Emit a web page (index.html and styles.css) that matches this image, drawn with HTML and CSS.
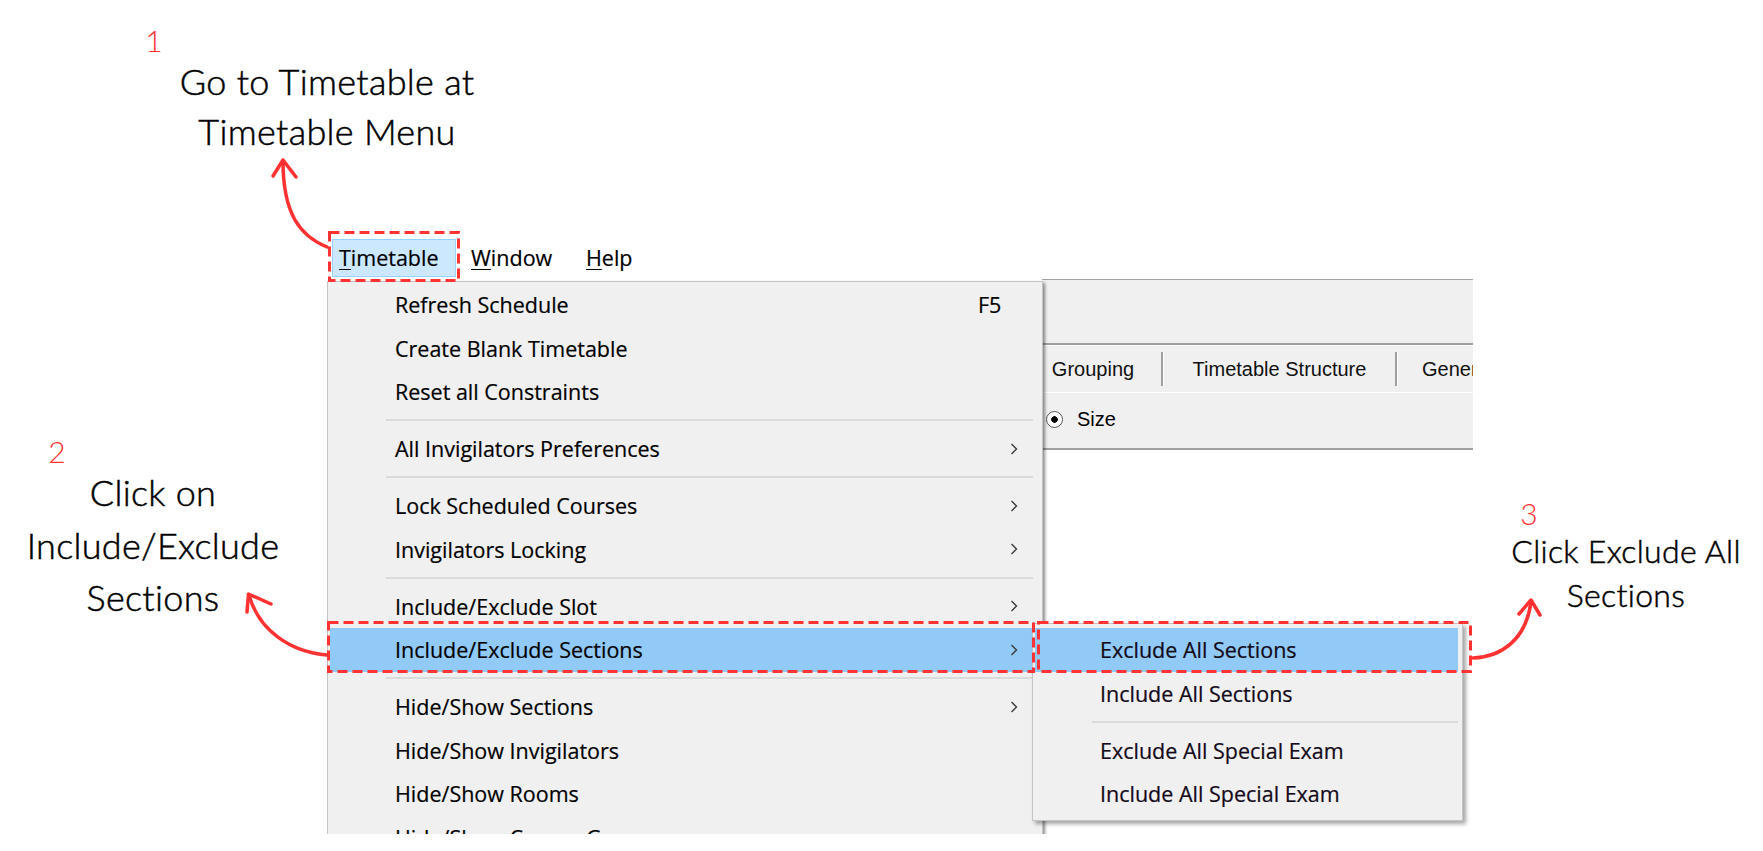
FILE: index.html
```html
<!DOCTYPE html>
<html lang="en">
<head>
<meta charset="utf-8">
<title>Timetable menu guide</title>
<link rel="stylesheet" href="styles.css">
</head>
<body>
<div class="stage">
  <div class="screen">
    <div class="menubar">
      <div class="mb-item mb-active"><u>T</u>imetable</div>
      <div class="mb-item mb-window"><u>W</u>indow</div>
      <div class="mb-item"><u>H</u>elp</div>
    </div>
    <div class="window">
      <div class="toolbar"></div>
      <div class="tabs">
        <div class="tab tab-1">Grouping</div>
        <div class="tab tab-2">Timetable Structure</div>
        <div class="tab tab-3">General</div>
      </div>
      <div class="options">
        <span class="radio"></span><span class="opt-label">Size</span>
      </div>
      <div class="content"></div>
    </div>

    <div class="menu main-menu">
      <div class="item"><span class="label">Refresh Schedule</span><span class="key">F5</span></div>
      <div class="item"><span class="label">Create Blank Timetable</span></div>
      <div class="item"><span class="label">Reset all Constraints</span></div>
      <div class="sep"></div>
      <div class="item"><span class="label">All Invigilators Preferences</span><svg class="chev" viewBox="0 0 8 12"><polyline points="1.5,1 6.5,6 1.5,11"/></svg></div>
      <div class="sep"></div>
      <div class="item"><span class="label">Lock Scheduled Courses</span><svg class="chev" viewBox="0 0 8 12"><polyline points="1.5,1 6.5,6 1.5,11"/></svg></div>
      <div class="item"><span class="label">Invigilators Locking</span><svg class="chev" viewBox="0 0 8 12"><polyline points="1.5,1 6.5,6 1.5,11"/></svg></div>
      <div class="sep"></div>
      <div class="item"><span class="label">Include/Exclude Slot</span><svg class="chev" viewBox="0 0 8 12"><polyline points="1.5,1 6.5,6 1.5,11"/></svg></div>
      <div class="item hl"><span class="label">Include/Exclude Sections</span><svg class="chev" viewBox="0 0 8 12"><polyline points="1.5,1 6.5,6 1.5,11"/></svg></div>
      <div class="sep"></div>
      <div class="item"><span class="label">Hide/Show Sections</span><svg class="chev" viewBox="0 0 8 12"><polyline points="1.5,1 6.5,6 1.5,11"/></svg></div>
      <div class="item"><span class="label">Hide/Show Invigilators</span></div>
      <div class="item"><span class="label">Hide/Show Rooms</span></div>
      <div class="item"><span class="label">Hide/Show Course Groups</span></div>
    </div>

    <div class="menu sub-menu">
      <div class="item hl"><span>Exclude All Sections</span></div>
      <div class="item"><span>Include All Sections</span></div>
      <div class="sep sub-sep"></div>
      <div class="item"><span>Exclude All Special Exam</span></div>
      <div class="item"><span>Include All Special Exam</span></div>
    </div>
  </div>

  <svg class="box box-1" width="132" height="51"><rect x="1.5" y="1.5" width="129" height="48"/></svg>
  <svg class="box box-2" width="708" height="52"><rect x="1.5" y="1.5" width="705" height="49"/></svg>
  <svg class="box box-3" width="435" height="52"><rect x="1.5" y="1.5" width="432" height="49"/></svg>

  <svg class="arrows" width="1763" height="851" viewBox="0 0 1763 851">
    <path d="M327 247 C300 236 283 214 283 161"/>
    <path d="M273 176 L283 160 L296 177"/>
    <path d="M327 655 C291 652 259 631 249 595"/>
    <path d="M247 612 L248.5 594 L271 604"/>
    <path d="M1473 658 C1501 657 1526 640 1531 602"/>
    <path d="M1519 614 L1531 600 L1540 615"/>
  </svg>

  <div class="num num-1">1</div>
  <div class="note note-1"><div>Go to Timetable at</div><div>Timetable Menu</div></div>

  <div class="num num-2">2</div>
  <div class="note note-2"><div>Click on</div><div>Include/Exclude</div><div>Sections</div></div>

  <div class="num num-3">3</div>
  <div class="note note-3"><div>Click Exclude All</div><div>Sections</div></div>
</div>
</body>
</html>
```
FILE: styles.css
```css
* { box-sizing: border-box; }

body {
  margin: 0;
  background: #ffffff;
  font-family: "Open Sans", "Noto Sans", sans-serif;
}

.stage {
  position: relative;
  width: 1763px;
  height: 851px;
  overflow: hidden;
  background: #ffffff;
}

/* captured application area */
.screen {
  position: absolute;
  left: 327px;
  top: 231px;
  width: 1146px;
  height: 603px;
  overflow: hidden;
}

.menubar {
  display: flex;
  height: 48px;
  padding: 8px 0 0 5px;
  font-size: 21.5px;
  color: #000;
  -webkit-text-stroke: 0.2px #000;
}

.mb-item {
  height: 38px;
  line-height: 35px;
  padding: 0 7px;
  border: 1px solid transparent;
  white-space: nowrap;
}

.mb-active {
  width: 124px;
  padding-left: 6px;
  background: #cce8ff;
  border-color: #99d1ff;
}

.mb-window {
  margin-left: 7px;
  width: 115px;
}

.mb-item u { text-decoration-thickness: 1px; text-underline-offset: 3px; }

/* background window */
.window {
  margin-left: 715px;
  width: 431px;
  height: 555px;
  display: flex;
  flex-direction: column;
  border-top: 1px solid #a3a3a3;
  font-family: "Liberation Sans", Arial, sans-serif;
  font-size: 20px;
  color: #000;
}

.toolbar {
  height: 65px;
  flex: none;
  background: #f0f0f0;
  border-bottom: 2px solid #a0a0a0;
}

.tabs {
  height: 48px;
  flex: none;
  display: flex;
  padding-top: 6px;
  background: #f0f0f0;
  border-top: 1px solid #ffffff;
  border-bottom: 1px solid #ffffff;
  overflow: hidden;
}

.tab {
  flex: none;
  height: 34px;
  line-height: 34px;
  text-align: center;
  white-space: nowrap;
  border-left: 1px solid #ffffff;
  border-right: 2px solid #a0a0a0;
  color: #111;
}

.tab-1 { width: 139px; margin-left: -18px; }
.tab-2 { width: 234px; }
.tab-3 { padding-left: 24px; border-right: none; text-align: left; }

.options {
  height: 57px;
  flex: none;
  display: flex;
  align-items: center;
  gap: 14px;
  padding-left: 4px;
  padding-bottom: 3px;
  background: #f0f0f0;
  border-bottom: 2px solid #a0a0a0;
}

.radio {
  width: 17px;
  height: 17px;
  border-radius: 50%;
  border: 1px solid #555;
  background: radial-gradient(circle, #000 0 3px, #fff 3.5px);
}

.opt-label { line-height: 1; }

.content { flex: 1; background: #fff; }

/* menus */
.menu {
  position: absolute;
  background: #f0f0f0;
  border: 1px solid #c4c4c4;
  font-size: 21.5px;
  color: #000;
  -webkit-text-stroke: 0.2px #000;
}

.main-menu {
  left: 0;
  top: 50px;
  width: 716px;
  height: 600px;
  padding: 1px 2px;
  box-shadow: 2px 2px 3px rgba(0, 0, 0, 0.45);
}

.sub-menu {
  left: 705px;
  top: 392px;
  width: 431px;
  padding: 4px 4px 4px 2px;
  box-shadow: 3px 3px 4px rgba(0, 0, 0, 0.35);
  color: #150a1c;
}

.item {
  display: flex;
  align-items: center;
  height: 43.5px;
  padding-left: 65px;
  white-space: nowrap;
}

.item.hl { background: #91c9f7; }

.label { width: 583px; flex: none; }

.chev {
  margin-left: auto;
  margin-right: 22px;
  width: 8px;
  height: 12px;
  fill: none;
  stroke: #3a3a3a;
  stroke-width: 1.4;
}

.sep {
  height: 13.5px;
  display: flex;
  align-items: center;
  padding: 0 7px 0 56px;
}

.sep::before {
  content: "";
  flex: 1;
  height: 2px;
  background: #dadada;
}

.sub-sep { padding: 0 0 0 57px; }

/* annotation layer */
.box {
  position: absolute;
  fill: none;
  stroke: #ff3333;
  stroke-width: 3;
  stroke-dasharray: 10 5;
}

.box-1 { left: 328px; top: 231px; }
.box-2 { left: 327px; top: 621px; }
.box-3 { left: 1037px; top: 621px; }

.arrows {
  position: absolute;
  left: 0;
  top: 0;
  fill: none;
  stroke: #ff3131;
  stroke-width: 3.5;
  stroke-linecap: round;
  stroke-linejoin: round;
}

.num {
  position: absolute;
  width: 30px;
  font-family: Lato, "Open Sans", sans-serif;
  font-weight: 300;
  font-size: 30px;
  line-height: 30px;
  text-align: center;
  color: #ff3131;
}

.num-1 { left: 139px; top: 25px; }
.num-2 { left: 42px; top: 436px; }
.num-3 { left: 1514px; top: 498px; }

.note {
  position: absolute;
  font-family: Lato, "Open Sans", sans-serif;
  font-weight: 300;
  text-align: center;
  color: #000;
  white-space: nowrap;
  -webkit-text-stroke: 0.5px #000;
}

.note-1 { left: 127px; top: 56px; width: 400px; font-size: 36px; line-height: 50px; letter-spacing: 0.3px; }
.note-2 { left: 3px; top: 466px; width: 300px; font-size: 36px; line-height: 52.5px; letter-spacing: 0.3px; }
.note-3 { left: 1496px; top: 529px; width: 260px; font-size: 32px; line-height: 44px; letter-spacing: 0.3px; }
```
